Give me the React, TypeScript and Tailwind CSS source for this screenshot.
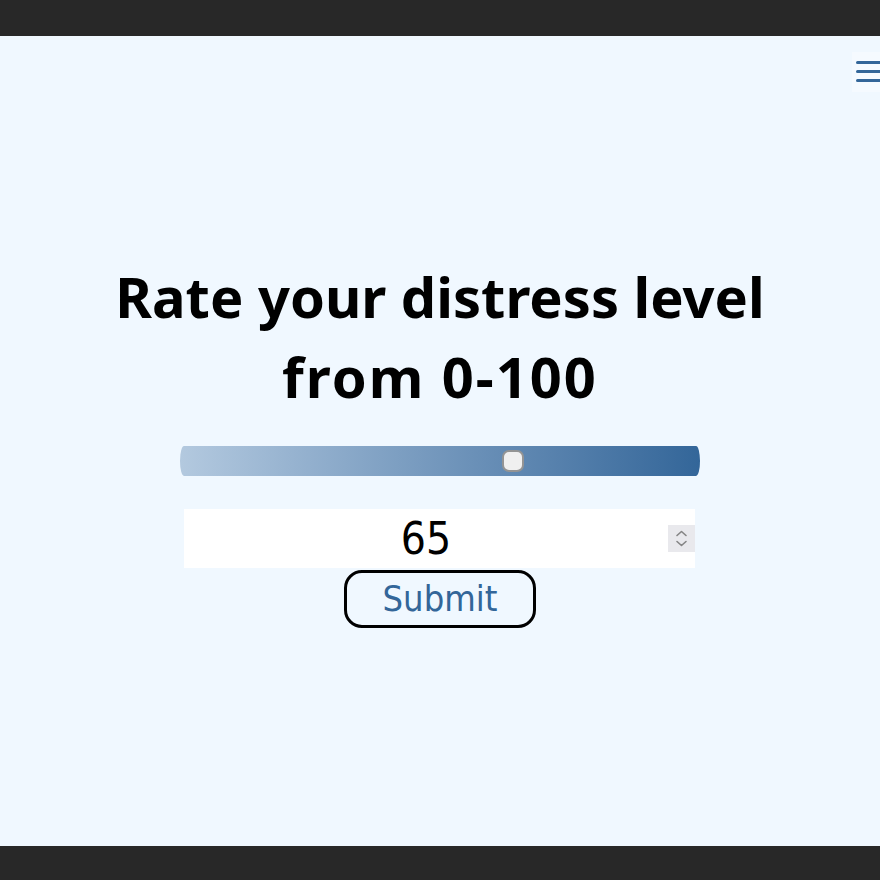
import React, { useState } from "react";

const Spinner = () => (
  <div className="flex h-[27px] w-[27px] items-center justify-center bg-[#e9e9ed]">
    <svg width="27" height="27" viewBox="0 0 27 27" fill="none" stroke="#858585" strokeWidth="1.6" strokeLinecap="round" strokeLinejoin="round">
      <path d="M9 10.5 L13.5 6.5 L18 10.5" />
      <path d="M9 16.5 L13.5 20.5 L18 16.5" />
    </svg>
  </div>
);

export default function App() {
  const [value] = useState(65);
  const thumbLeft = 11 + (value / 100) * (520 - 22);

  return (
    <div className="flex h-[880px] w-full flex-col overflow-hidden bg-[#282828]">
      <div className="h-[36px] shrink-0 bg-[#282828]" />
      <main className="relative flex h-[810px] shrink-0 flex-col items-center bg-[#f0f8ff] pt-[220px]">
        <button className="absolute left-[852px] top-[16px] flex h-[40px] w-[40px] flex-col gap-[6px] bg-[#f5faff] pl-[4px] pt-[9px]">
          <span className="block h-[3px] w-[30px] rounded-l-[2px] bg-[#336699]" />
          <span className="block h-[3px] w-[30px] rounded-l-[2px] bg-[#336699]" />
          <span className="block h-[3px] w-[30px] rounded-l-[2px] bg-[#336699]" />
        </button>

        <h1 className="text-center font-['Noto_Sans',sans-serif] text-[56px] font-bold leading-[80px] text-black">
          Rate your distress level
          <br />
          <span className="tracking-[2px]">from 0-100</span>
        </h1>

        <div
          role="slider"
          aria-valuenow={value}
          className="relative mt-[30px] h-[30px] w-[520px] rounded-[4px/15px] bg-gradient-to-r from-[#b3c9df] to-[#336699]"
        >
          <div
            className="absolute top-[4px] h-[22px] w-[22px] -translate-x-1/2 rounded-[7px] border-2 border-[#949494] bg-[#f0f0f0]"
            style={{ left: thumbLeft - 2 }}
          />
        </div>

        <div className="ml-[-1px] mt-[33px] flex h-[59px] w-[511px] items-center bg-white">
          <span className="flex-1 text-center font-['DejaVu_Sans_Condensed','DejaVu_Sans',sans-serif] text-[44px] leading-none text-black">
            {value}
          </span>
          <Spinner />
        </div>

        <button className="mt-[2px] h-[58px] w-[192px] rounded-[18px] border-[3px] border-black font-['DejaVu_Sans_Condensed','DejaVu_Sans',sans-serif] text-[36px] leading-none text-[#336699]">
          Submit
        </button>
      </main>
      <div className="h-[34px] shrink-0 bg-[#282828]" />
    </div>
  );
}
